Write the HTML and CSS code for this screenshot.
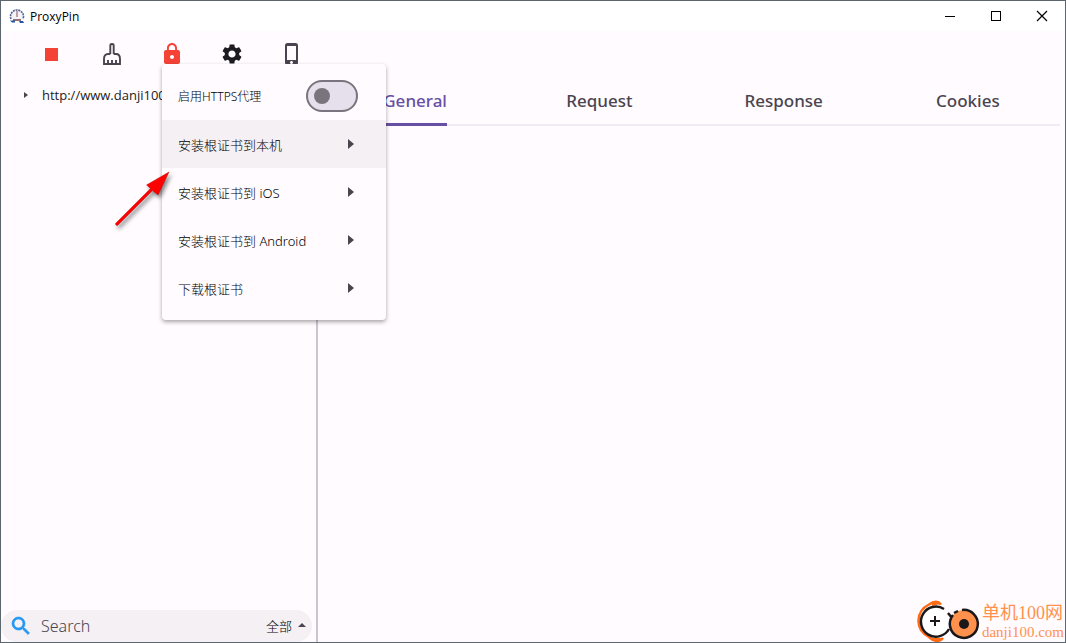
FILE: index.html
```html
<!DOCTYPE html>
<html lang="zh-CN">
<head>
<meta charset="utf-8">
<title>ProxyPin</title>
<link rel="stylesheet" href="styles.css">
</head>
<body>
<div class="window">
  <header class="titlebar">
    <svg class="app-logo" viewBox="0 0 16 16" aria-hidden="true">
      <path d="M2 11A6.500 6.500 0 1 1 14 11" fill="#f4f4f8" stroke="#53628f" stroke-width="1.600" stroke-dasharray="2 .8"/>
      <path d="M8 3v6" stroke="#8a4d5c" stroke-width="1"/>
      <path d="M4 12h8" stroke="#6a3036" stroke-width="1.400"/>
      <path d="M1 12.500h5v2H3zM10 13h4l1 2h-4z" fill="#2456a8"/>
    </svg>
    <h1 class="app-name">ProxyPin</h1>
    <div class="window-buttons">
      <button class="window-button" aria-label="Minimize"><svg viewBox="0 0 12 12" shape-rendering="crispEdges"><path d="M1 6.500h10" stroke="#000"/></svg></button>
      <button class="window-button" aria-label="Maximize"><svg viewBox="0 0 12 12" shape-rendering="crispEdges"><path d="M1.500 1.500h9v9h-9z" fill="none" stroke="#000"/></svg></button>
      <button class="window-button" aria-label="Close"><svg viewBox="0 0 12 12"><path d="M1 1l10 10M11 1L1 11" stroke="#000" stroke-width="1.200"/></svg></button>
    </div>
  </header>
  <nav class="toolbar">
    <button class="tool" aria-label="Stop"><svg viewBox="0 0 24 24"><path d="M5 6h13v13H5z" fill="#f44336"/></svg></button>
    <button class="tool" aria-label="Clear"><svg viewBox="0 0 24 24"><path d="M10.300 12V3.500q0-1.500 1.700-1.500t1.700 1.500V12M10.300 12H8q-4 0-4 5v5h16v-5q0-5-4-5h-2.300M8 22v-4M12 22v-4M16 22v-4" fill="none" stroke="#49454f" stroke-width="1.900"/></svg></button>
    <div class="menu-anchor">
      <button class="tool" aria-label="HTTPS"><svg viewBox="0 0 24 24"><path fill="#f44336" d="M18 8h-1V6c0-2.760-2.240-5-5-5S7 3.240 7 6v2H6c-1.100 0-2 .9-2 2v10c0 1.100.9 2 2 2h12c1.100 0 2-.9 2-2V10c0-1.100-.9-2-2-2zm-6 9c-1.100 0-2-.9-2-2s.9-2 2-2 2 .9 2 2-.9 2-2 2zm3.100-9H8.900V6c0-1.710 1.390-3.100 3.100-3.100s3.100 1.390 3.100 3.100v2z"/></svg></button>
      <div class="menu">
        <label class="menu-item menu-switch"><span>启用HTTPS代理</span><input class="switch" type="checkbox" role="switch"></label>
        <button class="menu-item active"><span>安装根证书到本机</span><i class="caret-right"></i></button>
        <button class="menu-item"><span>安装根证书到 iOS</span><i class="caret-right"></i></button>
        <button class="menu-item"><span>安装根证书到 Android</span><i class="caret-right"></i></button>
        <button class="menu-item"><span>下载根证书</span><i class="caret-right"></i></button>
      </div>
      <svg class="pointer" viewBox="0 0 64 68" aria-hidden="true"><path d="M3.500 57.500L38.500 22.500L34.500 19L57 6L46 29L40.500 24.500L5.500 59.500Q3.500 60 3.500 57.500Z" fill="#f00" stroke="#b00000" stroke-width=".4"/></svg>
    </div>
    <button class="tool" aria-label="Settings"><svg viewBox="0 0 24 24"><path fill="#1d1b20" d="M19.140 12.940c.04-.3.060-.61.060-.94 0-.32-.02-.64-.07-.94l2.030-1.580c.18-.14.230-.41.120-.61l-1.920-3.320c-.12-.22-.37-.29-.59-.22l-2.390.96c-.5-.38-1.030-.7-1.620-.94l-.36-2.540c-.04-.24-.24-.41-.48-.41h-3.840c-.24 0-.43.170-.47.410l-.36 2.540c-.59.240-1.130.570-1.620.940l-2.390-.96c-.22-.08-.47 0-.59.220L2.740 8.870c-.12.210-.08.470.120.610l2.030 1.580c-.05.3-.09.630-.09.940s.02.640.070.940l-2.030 1.580c-.18.140-.23.410-.12.610l1.920 3.320c.12.220.370.290.590.220l2.390-.96c.5.380 1.030.7 1.620.940l.36 2.540c.05.240.240.410.480.410h3.840c.24 0 .44-.17.470-.41l.36-2.540c.59-.24 1.130-.56 1.620-.94l2.390.96c.22.080.470 0 .59-.22l1.920-3.320c.12-.22.070-.47-.12-.61l-2.010-1.580zM12 15.600c-1.980 0-3.600-1.620-3.600-3.600s1.620-3.600 3.600-3.600 3.600 1.620 3.600 3.600-1.620 3.600-3.600 3.600z"/></svg></button>
    <button class="tool" aria-label="Phone"><svg viewBox="0 0 24 24"><path fill="#49454f" d="M15.500 1h-8A2.500 2.500 0 0 0 5 3.500v17A2.500 2.500 0 0 0 7.500 23h8a2.500 2.500 0 0 0 2.500-2.500v-17A2.500 2.500 0 0 0 15.500 1zm-4 21c-.83 0-1.500-.67-1.500-1.500s.67-1.500 1.500-1.500 1.500.67 1.500 1.500-.67 1.500-1.500 1.500zm4.500-4H7V4h9v14z"/></svg></button>
  </nav>
  <div class="workspace">
    <aside class="sidebar">
      <div class="host"><i class="caret-small"></i><span>http://www.danji100</span></div>
      <form class="search">
        <svg class="search-icon" viewBox="0 0 24 24" aria-hidden="true"><path fill="#2196f3" stroke="#2196f3" stroke-width=".7" d="M15.500 14h-.79l-.28-.27A6.470 6.470 0 0 0 16 9.500 6.500 6.500 0 1 0 9.500 16c1.610 0 3.090-.59 4.230-1.570l.27.280v.79l5 4.990L20.490 19l-4.990-5zm-6 0C7.010 14 5 11.990 5 9.500S7.010 5 9.500 5 14 7.010 14 9.500 11.990 14 9.500 14z"/></svg>
        <input class="search-input" type="text" placeholder="Search" aria-label="Search">
        <button class="filter" type="button"><span>全部</span><i class="caret-up"></i></button>
      </form>
    </aside>
    <main class="details">
      <div class="tabs" role="tablist">
        <button class="tab selected" role="tab" aria-selected="true"><span>General</span></button>
        <button class="tab" role="tab"><span>Request</span></button>
        <button class="tab" role="tab"><span>Response</span></button>
        <button class="tab" role="tab"><span>Cookies</span></button>
      </div>
    </main>
  </div>
  <div class="brand">
    <svg class="brand-logo" viewBox="0 0 66 42" aria-hidden="true">
      <path d="M25 4.500C22 1 18 1 13 4.500C0 11 -2 29 13 37C18 42 24 42 27 38" fill="none" stroke="#ff6a13" stroke-width="2.500"/>
      <path d="M16 4Q21 0 25 4.500Q20 4 16 6ZM16 38Q22 38 27 38Q22 43 16 38Z" fill="#ff6a13"/>
      <path d="M28 9A15 15 0 1 0 33 29" fill="#fff" stroke="#1c1718" stroke-width="2.500"/>
      <path d="M19 16v10M14 21h10" stroke="#1c1718" stroke-width="2"/>
      <circle cx="48" cy="24" r="14" fill="#ff914d"/>
      <path d="M46 10A14 14 0 1 1 37 15M32 13l4 5M38 13l4-2" fill="none" stroke="#1c1718" stroke-width="2.500"/>
      <circle cx="48" cy="24" r="5" fill="#1c1718"/>
    </svg>
    <div class="brand-text"><strong>单机100网</strong><span>danji100.com</span></div>
  </div>
</div>
</body>
</html>
```
FILE: styles.css
```css
* { box-sizing: border-box; }
body { margin: 0; font-family: "Noto Sans", "Noto Sans CJK SC", sans-serif; color: #1d1b20; }
button, input { font: inherit; color: inherit; border: 0; padding: 0; background: none; }
svg { display: block; }
.window { position: relative; height: 100vh; display: flex; flex-direction: column; background: #fffbff; border: 1px solid #5c666e; overflow: hidden; }
.titlebar { display: flex; align-items: center; height: 30px; flex: none; padding-left: 8px; background: #fff; }
.app-logo { width: 16px; height: 16px; }
.app-name { margin: 0 0 0 5px; font: 400 12px "Open Sans", sans-serif; color: #000; }
.window-buttons { display: flex; margin-left: auto; }
.window-button { width: 46px; height: 30px; display: grid; place-items: center; }
.window-button svg { width: 12px; height: 12px; }
.workspace { flex: 1; display: flex; min-height: 0; }
.sidebar { width: 317px; flex: none; display: flex; flex-direction: column; border-right: 2px solid #cac4d0; }
.toolbar { display: flex; gap: 36px; padding: 11px 0 11px 39px; }
.tool { width: 24px; height: 24px; display: block; }
.tool svg { width: 24px; height: 24px; }
.menu-anchor { position: relative; }
.menu { position: absolute; z-index: 2; top: 22px; left: 2px; width: 224px; padding: 8px 0; border-radius: 4px; background: #fffbff; box-shadow: 0 2px 4px rgba(0, 0, 0, .35); }
.menu-item { display: flex; align-items: center; justify-content: space-between; width: 100%; height: 48px; padding: 0 32px 0 16px; font-size: 13px; font-weight: 300; text-align: left; white-space: nowrap; color: #000; }
.menu-switch { padding-right: 28px; font-size: 12px; }
.menu-item.active { background: #f4f0f4; }
.switch { appearance: none; margin: 0; display: flex; align-items: center; width: 52px; height: 32px; padding-left: 6px; border: 2px solid #79747e; border-radius: 16px; background: #e6e0ec; }
.switch::before { content: ""; width: 16px; height: 16px; border-radius: 50%; background: #79747e; }
.caret-right { border: 5px solid transparent; border-left: 6px solid #49454f; border-right: 0; }
.pointer { position: absolute; z-index: 3; top: 124px; left: -48px; width: 64px; height: 68px; filter: drop-shadow(2px 3px 2px rgba(0, 0, 0, .5)); }
.host { display: flex; align-items: center; gap: 14px; padding: 7px 0 0 23px; font-family: "Open Sans", sans-serif; font-size: 13px; line-height: 22px; white-space: nowrap; }
.caret-small { border: 3px solid transparent; border-left: 4px solid #49454f; border-right: 0; }
.search { display: flex; align-items: center; height: 32px; margin: auto 4px 0 0; padding: 0 6px 0 8px; border-radius: 16px; background: #f4f0f4; }
.search-icon { width: 24px; height: 24px; }
.search-input { flex: 1; min-width: 0; margin-left: 8px; font-size: 16px; font-weight: 300; outline: 0; }
.search-input::placeholder { color: #49454f; opacity: 1; }
.filter { display: flex; align-items: center; gap: 6px; padding-bottom: 2px; font-size: 13px; font-weight: 300; color: #000; }
.caret-up { border: 4px solid transparent; border-bottom: 4px solid #49454f; border-top: 0; }
.details { flex: 1; padding: 3px 5px 0; }
.tabs { display: grid; grid-template-columns: repeat(4, 1fr); height: 46px; border-bottom: 2px solid #f0eaf4; }
.tab { display: flex; justify-content: center; font-size: 17px; font-weight: 500; line-height: 24px; color: #49454f; }
.tab span { height: 46px; padding-top: 9px; }
.tab.selected { color: #6750a4; }
.tab.selected span { border-bottom: 3px solid #6750a4; }
.brand { position: absolute; right: 1px; bottom: 0; display: flex; align-items: center; color: #ff914d; }
.brand-logo { width: 66px; height: 42px; }
.brand-text { display: flex; flex-direction: column; font-family: "Liberation Serif", "Noto Sans CJK SC", serif; font-size: 15px; line-height: 16px; }
.brand-text strong { font-size: 18px; line-height: 22px; font-weight: 400; }
```
